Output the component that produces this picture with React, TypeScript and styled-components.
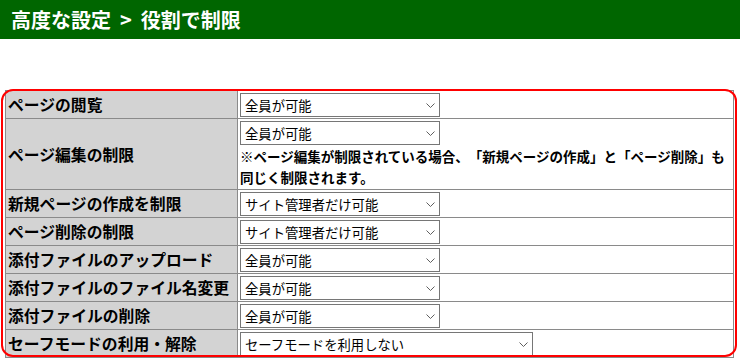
import React from "react";
import styled, { createGlobalStyle } from "styled-components";

type Permission = {
  label: string;
  options: string[];
  value: string;
  wide?: boolean;
  note?: string;
};

const ACCESS = ["全員が可能", "サイト管理者だけ可能"];

const permissions: Permission[] = [
  { label: "ページの閲覧", options: ACCESS, value: "全員が可能" },
  {
    label: "ページ編集の制限",
    options: ACCESS,
    value: "全員が可能",
    note: "※ページ編集が制限されている場合、「新規ページの作成」と「ページ削除」も同じく制限されます。",
  },
  { label: "新規ページの作成を制限", options: ACCESS, value: "サイト管理者だけ可能" },
  { label: "ページ削除の制限", options: ACCESS, value: "サイト管理者だけ可能" },
  { label: "添付ファイルのアップロード", options: ACCESS, value: "全員が可能" },
  { label: "添付ファイルのファイル名変更", options: ACCESS, value: "全員が可能" },
  { label: "添付ファイルの削除", options: ACCESS, value: "全員が可能" },
  {
    label: "セーフモードの利用・解除",
    options: ["セーフモードを利用しない", "セーフモードを利用する"],
    value: "セーフモードを利用しない",
    wide: true,
  },
];

const Chevron = () => (
  <ChevronIcon width="9" height="5" viewBox="0 0 9 5" aria-hidden="true">
    <path d="M0.5 0.5 L4.5 4.5 L8.5 0.5" fill="none" stroke="#5f5f5f" strokeWidth="1" />
  </ChevronIcon>
);

export default function App() {
  return (
    <>
      <GlobalStyle />
      <Header>
        高度な設定<Separator>&gt;</Separator>役割で制限
      </Header>
      <Content>
        <Frame>
          <SettingsTable>
            <tbody>
              {permissions.map((p) => (
                <tr key={p.label}>
                  <Label>{p.label}</Label>
                  <Field>
                    <SelectBox>
                      <Select defaultValue={p.value} $wide={p.wide}>
                        {p.options.map((o) => (
                          <option key={o}>{o}</option>
                        ))}
                      </Select>
                      <Chevron />
                    </SelectBox>
                    {p.note && <Note>{p.note}</Note>}
                  </Field>
                </tr>
              ))}
            </tbody>
          </SettingsTable>
          <Highlight />
        </Frame>
      </Content>
    </>
  );
}

const GlobalStyle = createGlobalStyle`
  body {
    margin: 0;
    background: #fff;
    font-family: "Noto Sans CJK JP", "Noto Sans", sans-serif;
    color: #000;
    text-spacing-trim: space-all;
  }
`;

const Header = styled.h1`
  margin: 0;
  height: 39px;
  padding-left: 11px;
  background: #006600;
  color: #fff;
  font-size: 20px;
  font-weight: bold;
  line-height: 39px;
  white-space: nowrap;
`;

const Separator = styled.span`
  margin: 0 9px;
`;

const Content = styled.div`
  padding: 51px 0 0 5px;
`;

const Frame = styled.div`
  position: relative;
  width: fit-content;
`;

const Highlight = styled.div`
  position: absolute;
  left: -4px;
  top: -1px;
  right: -3px;
  bottom: 1px;
  border: 2px solid #ff0000;
  border-radius: 12px;
  pointer-events: none;
`;

const SettingsTable = styled.table`
  width: 729px;
  border-collapse: collapse;
  border: 1px solid #8a8a8a;
`;

const Label = styled.th`
  width: 227px;
  padding: 0 2px;
  background: #d3d3d3;
  border: 1px solid #8a8a8a;
  font-size: 15.8px;
  font-weight: bold;
  text-align: left;
  white-space: nowrap;
  vertical-align: middle;
`;

const Field = styled.td`
  padding: 2px 2px 1px;
  border: 1px solid #8a8a8a;
  background: #fff;
  vertical-align: middle;
`;

const SelectBox = styled.div`
  position: relative;
  display: flex;
  width: fit-content;
`;

const Select = styled.select<{ $wide?: boolean }>`
  appearance: none;
  width: ${(p) => (p.$wide ? "293px" : "200px")};
  height: 24px;
  margin: 0;
  padding: 0 20px 0 4px;
  border: 1px solid #767676;
  border-radius: 0;
  background: #fff;
  color: #000;
  font-family: "Noto Sans CJK JP", "Noto Sans", sans-serif;
  font-size: 13.33px;
`;

const ChevronIcon = styled.svg`
  position: absolute;
  right: 5px;
  top: 10px;
  pointer-events: none;
`;

const Note = styled.div`
  font-size: 13.5px;
  font-weight: bold;
  line-height: 21px;
  padding-top: 1px;
`;
